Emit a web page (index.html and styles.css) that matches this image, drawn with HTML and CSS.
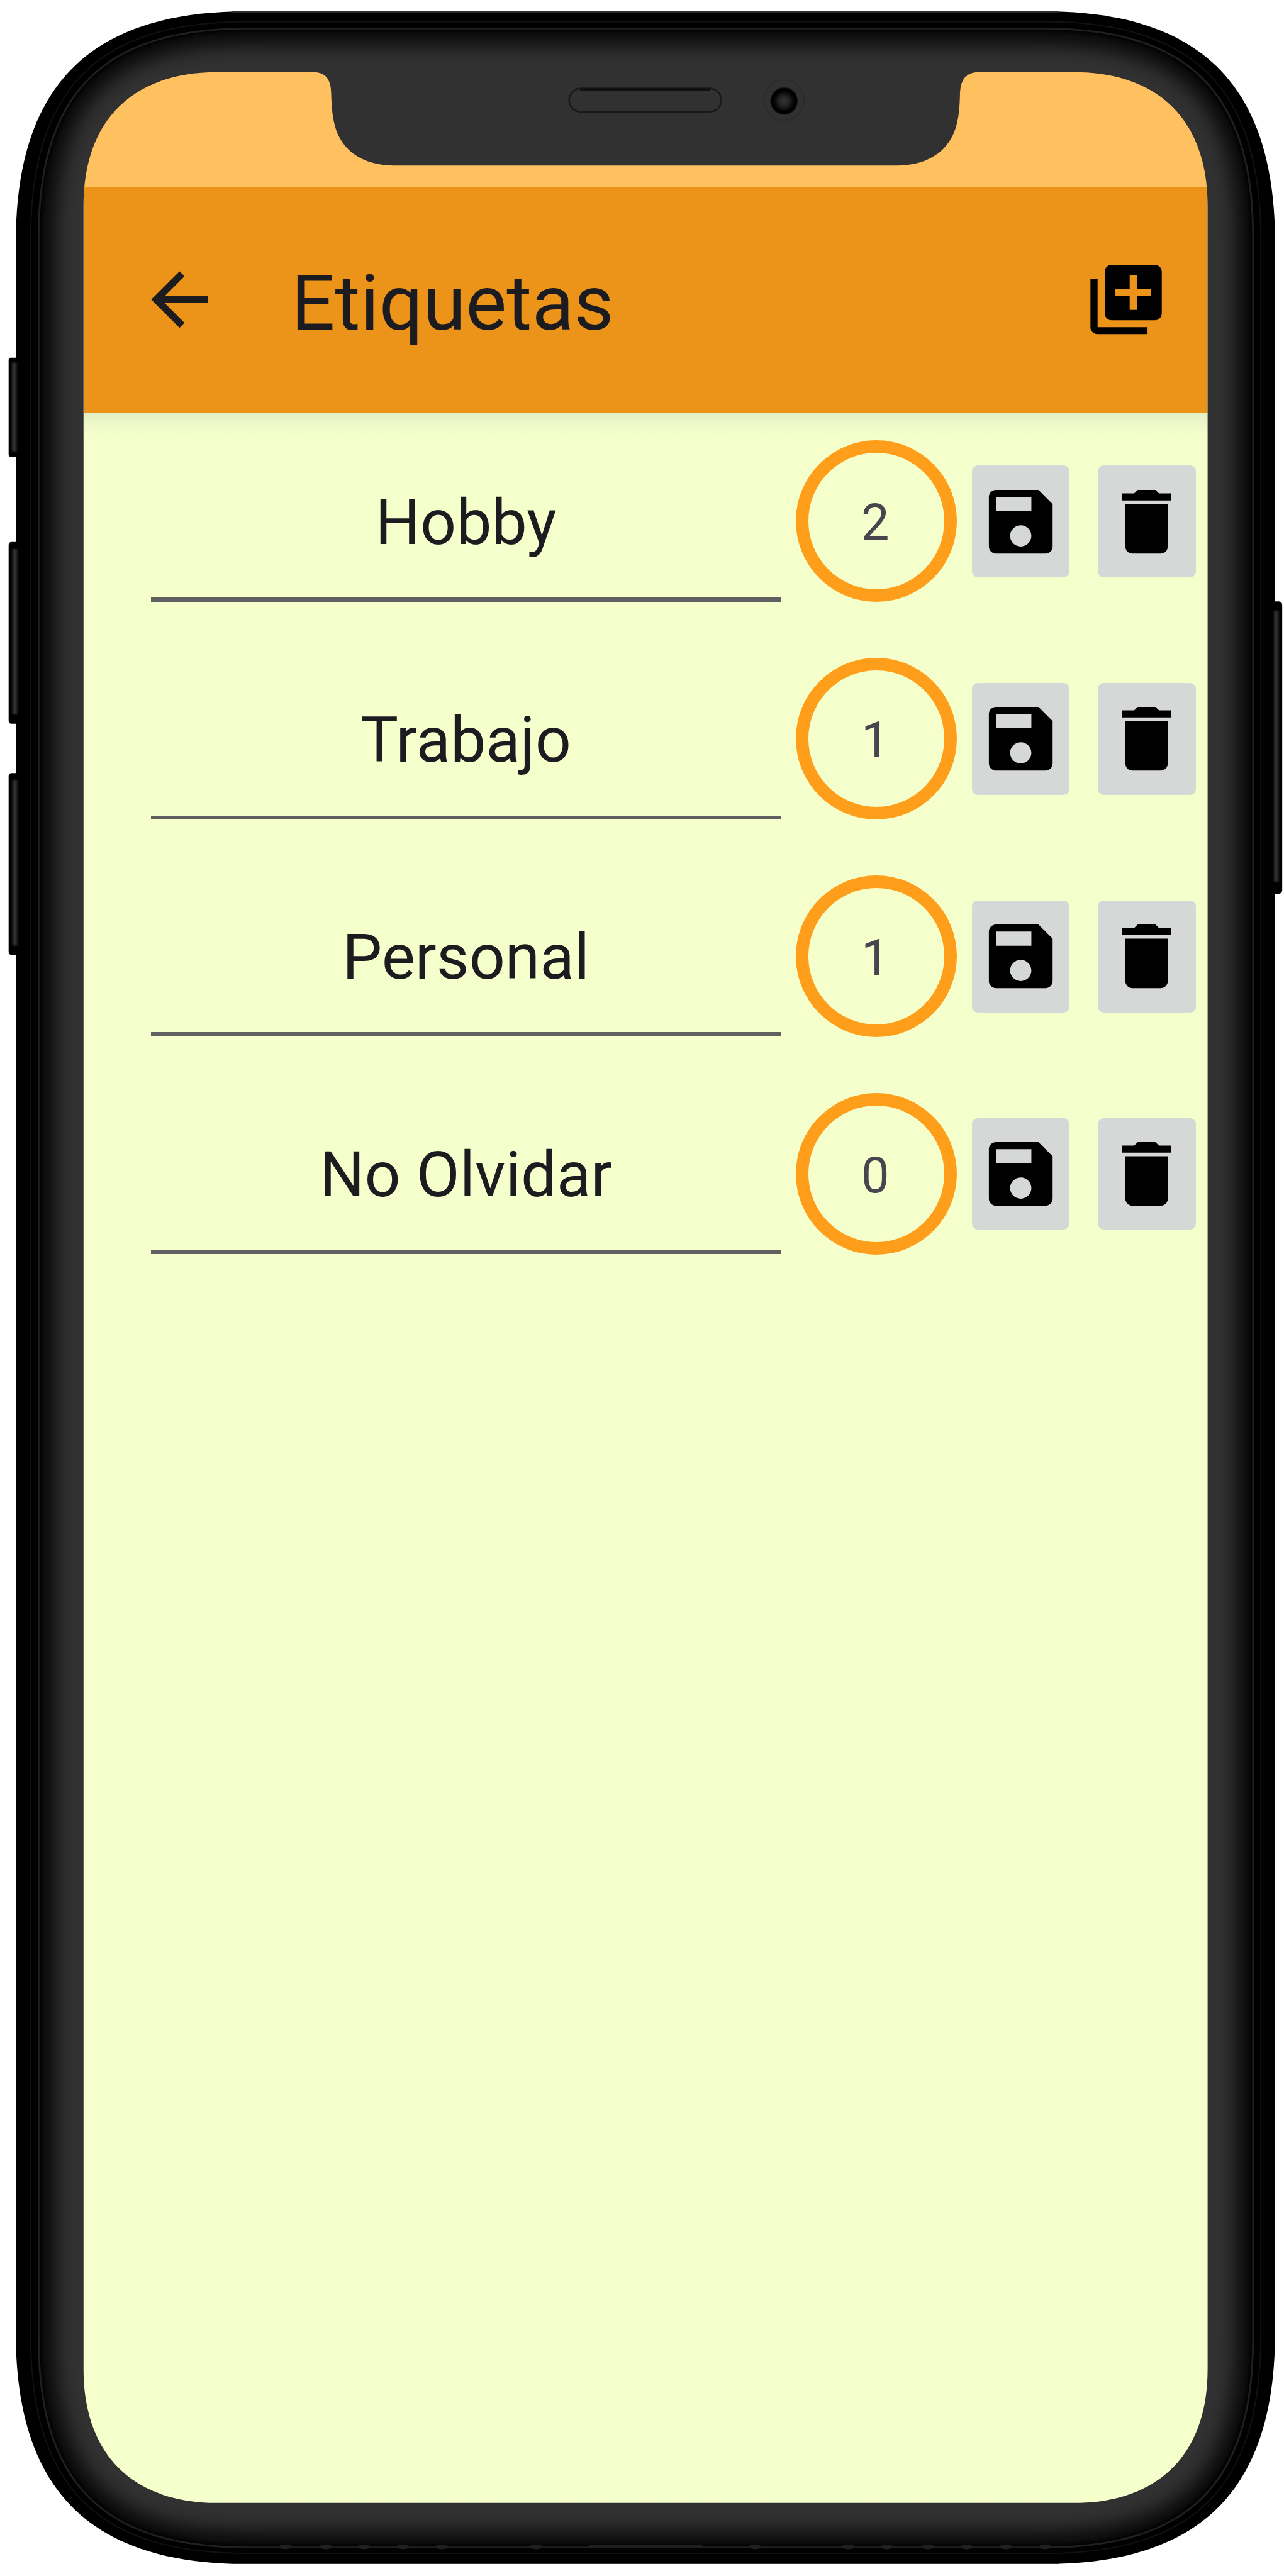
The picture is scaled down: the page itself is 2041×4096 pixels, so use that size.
FILE: index.html
```html
<!DOCTYPE html>
<html lang="es">
<head>
<meta charset="utf-8">
<title>Etiquetas</title>
<link rel="stylesheet" href="styles.css">
</head>
<body>
<svg class="defs" width="0" height="0" aria-hidden="true">
  <symbol id="save" viewBox="0 0 24 24"><path d="M17 3H5c-1.11 0-2 .9-2 2v14c0 1.1.89 2 2 2h14c1.1 0 2-.9 2-2V7l-4-4zm-5 16c-1.66 0-3-1.34-3-3s1.34-3 3-3 3 1.34 3 3-1.34 3-3 3zm3-10H5V5h10v4z"/></symbol>
  <symbol id="delete" viewBox="0 0 24 24"><path d="M6 19c0 1.100.9 2 2 2h8c1.100 0 2-.9 2-2V7H6v12zM19 4h-3.500l-1-1h-5l-1 1H5v2h14V4z"/></symbol>
</svg>
<div class="phone">
  <main class="screen">
    <div class="status-bar"></div>
    <header class="app-bar">
      <svg class="back" viewBox="0 0 24 24"><path d="M20 11H7.830l5.590-5.590L12 4l-8 8 8 8 1.410-1.410L7.830 13H20v-2z"/></svg>
      <h1 class="title">Etiquetas</h1>
      <svg class="add" viewBox="0 0 24 24" preserveAspectRatio="none"><path d="M4 6H2v14c0 1.100.9 2 2 2h14v-2H4V6zm16-4H8c-1.100 0-2 .9-2 2v12c0 1.100.9 2 2 2h12c1.100 0 2-.9 2-2V4c0-1.100-.9-2-2-2zm-1 9h-4v4h-2v-4H9V9h4V5h2v4h4v2z"/></svg>
    </header>
    <section class="list">
      <div class="row">
        <div class="field">Hobby</div>
        <div class="count">2</div>
        <div class="btn save"><svg class="icon"><use href="#save"/></svg></div>
        <div class="btn"><svg class="icon"><use href="#delete"/></svg></div>
      </div>
      <div class="row">
        <div class="field thin">Trabajo</div>
        <div class="count">1</div>
        <div class="btn save"><svg class="icon"><use href="#save"/></svg></div>
        <div class="btn"><svg class="icon"><use href="#delete"/></svg></div>
      </div>
      <div class="row">
        <div class="field">Personal</div>
        <div class="count">1</div>
        <div class="btn save"><svg class="icon"><use href="#save"/></svg></div>
        <div class="btn"><svg class="icon"><use href="#delete"/></svg></div>
      </div>
      <div class="row">
        <div class="field">No Olvidar</div>
        <div class="count">0</div>
        <div class="btn save"><svg class="icon"><use href="#save"/></svg></div>
        <div class="btn"><svg class="icon"><use href="#delete"/></svg></div>
      </div>
    </section>
  </main>
  <svg class="frame" viewBox="0 0 2160 4335" preserveAspectRatio="none" aria-hidden="true">
    <defs>
      <filter id="soft" filterUnits="userSpaceOnUse" x="0" y="0" width="2160" height="4335"><feGaussianBlur stdDeviation="20"/></filter>
      <filter id="tight" filterUnits="userSpaceOnUse" x="0" y="0" width="2160" height="4335"><feGaussianBlur stdDeviation="4"/></filter>
      <filter id="edge" x="-50%" y="-10%" width="200%" height="120%"><feGaussianBlur stdDeviation="1.500"/></filter>
      <radialGradient id="lens"><stop offset="0" stop-color="#343434"/><stop offset=".3" stop-color="#262626"/><stop offset=".75" stop-color="#000"/><stop offset=".88" stop-color="#000"/><stop offset="1" stop-color="#313131"/></radialGradient>
      <path id="rim" d="M65 400C65 156 173 48 417 48H1756C2000 48 2108 156 2108 400V3935C2108 4179 2000 4287 1756 4287H417C173 4287 65 4179 65 3935Z"/>
      <clipPath id="rim-clip"><use href="#rim"/></clipPath>
      <mask id="hole" maskUnits="userSpaceOnUse" x="0" y="0" width="2160" height="4335">
        <rect width="2160" height="4335" fill="#fff"/>
        <path fill="#000" d="M140.500 346C140.500 203 223 121.500 365 121.500H528Q556 121.500 557 155Q558 190 562 206C572 254 612 278.500 662 278.500H1510C1560 278.500 1600 254 1610 206Q1614.500 190 1615 155Q1617 121.500 1646 121.500H1807C1949 121.500 2031.500 203 2031.500 346V3987C2031.500 4130 1949 4212 1807 4212H365C223 4212 140.500 4130 140.500 3987Z"/>
      </mask>
    </defs>
    <g fill="#000">
      <rect x="14.500" y="602" width="30" height="167" rx="4"/>
      <rect x="14.500" y="912" width="30" height="306" rx="5"/>
      <rect x="14.500" y="1301" width="30" height="306" rx="5"/>
      <rect x="2127" y="1012" width="30" height="492" rx="6"/>
    </g>
    <g mask="url(#hole)">
      <path fill="#000" d="M26.500 409C26.500 144 151 19 416 19H1756C2020 19 2145 144 2145 409V3925C2145 4190 2020 4315 1756 4315H416C151 4315 26.500 4190 26.500 3925Z"/>
      <path fill="none" stroke="#121212" stroke-width="2" d="M51.500 404C51.500 150 163 36.500 417 36.500H1756C2010 36.500 2121 150 2121 404V3930C2121 4184 2010 4297 1756 4297H417C163 4297 51.500 4184 51.500 3930Z"/>
      <use href="#rim" fill="#313131"/>
      <g clip-path="url(#rim-clip)">
        <use href="#rim" fill="none" stroke="#000" stroke-width="28" filter="url(#soft)"/>
        <use href="#rim" fill="none" stroke="#000" stroke-width="28" filter="url(#soft)"/>
        <use href="#rim" fill="none" stroke="#000" stroke-width="10" filter="url(#tight)"/>
      </g>
      <use href="#rim" fill="none" stroke="#202020" stroke-width="3"/>
      <g fill="#202020">
        <ellipse cx="480" cy="4286" rx="11" ry="4"/><ellipse cx="548" cy="4286" rx="11" ry="4"/><ellipse cx="612" cy="4286" rx="11" ry="4"/><ellipse cx="678" cy="4286" rx="11" ry="4"/><ellipse cx="743" cy="4286" rx="11" ry="4"/><ellipse cx="902" cy="4286" rx="11" ry="4"/>
        <rect x="990" y="4282" width="192" height="5" rx="2.500"/>
        <ellipse cx="1270" cy="4286" rx="11" ry="4"/><ellipse cx="1427" cy="4286" rx="11" ry="4"/><ellipse cx="1492" cy="4286" rx="11" ry="4"/><ellipse cx="1561" cy="4286" rx="11" ry="4"/><ellipse cx="1626" cy="4286" rx="11" ry="4"/><ellipse cx="1692" cy="4286" rx="11" ry="4"/><ellipse cx="1758" cy="4286" rx="11" ry="4"/>
      </g>
      <path stroke="#333" stroke-width="2" d="M390 20H1782M390 4314H1782"/>
      <rect x="957.500" y="149" width="256" height="39" rx="19.500" fill="none" stroke="#1a1a1a" stroke-width="3"/>
      <path d="M976 150.500H1195" stroke="#111" stroke-width="4"/>
      <circle cx="1319" cy="168.500" r="34" fill="none" stroke="#2b2b2b" stroke-width="2"/>
      <circle cx="1319" cy="170" r="24" fill="url(#lens)"/>
    </g>
    <g fill="#2e2e2e" filter="url(#edge)">
      <rect x="20" y="610" width="8" height="150"/>
      <rect x="21" y="924" width="8" height="278"/>
      <rect x="21" y="1313" width="8" height="278"/>
      <rect x="2143" y="1028" width="8" height="456"/>
    </g>
  </svg>
</div>
</body>
</html>
```
FILE: styles.css
```css
/* 1rem = 100 design pixels */
html {
  font-size: 94.49px;
}

body {
  margin: 0;
  background: #fff;
  font-family: Roboto, "Liberation Sans", sans-serif;
}

.defs {
  display: block;
}

.phone {
  position: relative;
  box-sizing: border-box;
  width: 2041px;
  height: 4096px;
  padding: 1.215rem 1.285rem 1.23rem 1.405rem;
  overflow: hidden;
}

.frame {
  position: absolute;
  inset: 0;
  width: 100%;
  height: 100%;
}

.screen {
  display: flex;
  flex-direction: column;
  height: 100%;
  background: #f5ffcb;
  clip-path: inset(0 round 1.9rem);
}

.status-bar {
  height: 1.93rem;
  flex: none;
  background: #ffc160;
}

.app-bar {
  display: flex;
  align-items: center;
  box-sizing: border-box;
  height: 3.795rem;
  flex: none;
  padding: 0 0.655rem 0 0.897rem;
  background: #ec931a;
}

.back {
  width: 1.426rem;
  height: 1.426rem;
  fill: #1c1b1f;
}

.title {
  flex: 1;
  margin: 0;
  padding: 0.14rem 0 0 1.17rem;
  font-size: 1.3rem;
  font-weight: 400;
  line-height: 1.172;
  color: #1c1b1f;
}

.add {
  width: 1.44rem;
  height: 1.4rem;
}

.list {
  flex: 1;
  background: linear-gradient(#e2eec4, #edf7c9 0.18rem, #f5ffcb 0.38rem);
}

.row {
  display: flex;
  align-items: center;
  height: 3.66rem;
  padding-left: 1.135rem;
}

.field {
  align-self: flex-start;
  box-sizing: border-box;
  width: 10.597rem;
  height: 3.185rem;
  padding-top: 1.228rem;
  border-bottom: 0.075rem solid #605f62;
  font-size: 1.062rem;
  line-height: 1.25rem;
  text-align: center;
  color: #1c1b1f;
}

.field.thin {
  height: 3.18rem;
  border-bottom-width: 0.056rem;
}

.count {
  display: flex;
  align-items: center;
  justify-content: center;
  box-sizing: border-box;
  width: 2.71rem;
  height: 2.72rem;
  margin: 0 0.255rem 0 0.248rem;
  padding: 0.04rem 0.03rem 0 0;
  border: 0.22rem solid #ff9e1b;
  border-radius: 50%;
  font-size: 0.84rem;
  color: #49454f;
}

.btn {
  display: flex;
  align-items: center;
  justify-content: center;
  width: 1.645rem;
  height: 1.88rem;
  margin-top: 0.01rem;
  border-radius: 0.1rem;
  background: #d6d7d7;
}

.save {
  margin-right: 0.475rem;
}

.icon {
  width: 1.43rem;
  height: 1.43rem;
}
```
